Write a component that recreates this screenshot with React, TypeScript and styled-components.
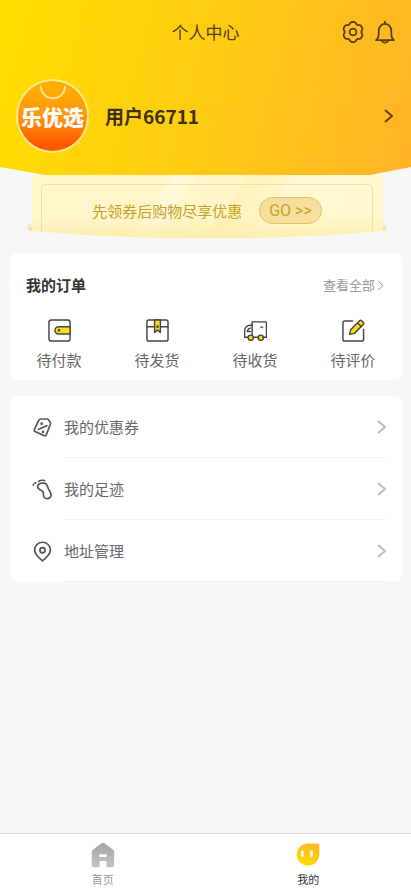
import React from "react";
import styled, { createGlobalStyle } from "styled-components";

const GlobalStyle = createGlobalStyle`
  *, *::before, *::after { box-sizing: border-box; }
  body {
    margin: 0;
    background: #f7f7f7;
    color: #333;
    font-family: "Noto Sans CJK SC", "Noto Sans", sans-serif;
  }
  button {
    margin: 0;
    padding: 0;
    border: 0;
    background: none;
    color: inherit;
    font: inherit;
    cursor: pointer;
  }
  a { color: inherit; text-decoration: none; }
  h1, h2, p, ul { margin: 0; padding: 0; }
  ul { list-style: none; }
  svg { display: block; flex: none; }
`;

const Page = styled.div`
  display: flex;
  flex-direction: column;
  min-height: 100vh;
`;

const Header = styled.header`
  height: 175px;
  color: #533e0c;
  background: linear-gradient(105deg, #ffde00 0%, #ffcf10 42%, #ffb326 100%);
  clip-path: polygon(0 0, 100% 0, 100% 167px, 90% 100%, 11% 100%, 0 167px);
`;

const TitleBar = styled.div`
  display: grid;
  grid-template-columns: 1fr auto 1fr;
  align-items: center;
  height: 64px;
  padding: 0 14px;
`;

const Title = styled.h1`
  grid-column: 2;
  font-size: 17px;
  line-height: 24px;
  font-weight: 400;
`;

const Actions = styled.div`
  display: flex;
  justify-content: flex-end;
  gap: 8px;
`;

const Profile = styled.a`
  display: flex;
  align-items: center;
  height: 104px;
  padding: 0 18px 0 16px;
`;

const Avatar = styled.span`
  position: relative;
  display: flex;
  align-items: center;
  justify-content: center;
  width: 73px;
  height: 74px;
  border: 2px solid #ffe98a;
  border-radius: 50%;
  background: linear-gradient(#ffae00 10%, #ff9410 50%, #ff5a00 90%);
  color: #fff;
  font-size: 21px;
  line-height: 24px;
  font-weight: 900;
  white-space: nowrap;
`;

const BagHandle = styled.svg`
  position: absolute;
  top: 4px;
  left: 20px;
`;

const UserName = styled.span`
  flex: 1;
  padding: 0 0 0 16px;
  color: #3d310c;
  font-size: 19px;
  line-height: 28px;
  font-weight: 700;
`;

const Coupon = styled.a`
  position: relative;
  display: block;
  height: 63px;
  margin: 0 28px 0 32px;
  padding: 9px 10px 0 9px;

  &::before,
  &::after {
    content: "";
    position: absolute;
    bottom: 7px;
    width: 10px;
    height: 9px;
    border-radius: 5px;
    background: linear-gradient(#f8f6ea, #e6dcae);
  }
  &::before { left: -5px; }
  &::after { right: -4px; }
`;

const CouponPaper = styled.span`
  position: absolute;
  inset: 0;
  z-index: 1;
  clip-path: polygon(0 0, 100% 0, 100% 56px, 85% 60px, 65% 100%, 35% 100%, 15% 60px, 0 56px);
  background:
    linear-gradient(#fff3b000 65%, #faeaa0b0),
    linear-gradient(125deg, #fff6cc 36%, #fff9da 36%, #fff9da 42%, #fff6cc 42%, #fff5c8 55%, #fff2b8 55%, #fff6c8 66%, #fff8d4 66%, #fff8cc);
`;

const CouponBody = styled.span`
  position: relative;
  z-index: 2;
  display: flex;
  align-items: center;
  justify-content: center;
  gap: 17px;
  height: 48px;
  padding: 4px 0 0;
  border: 1px solid #eee1a4;
  border-bottom: 0;
  border-radius: 5px 5px 0 0;
  color: #c6a126;
  font-size: 15px;
  line-height: 22px;
`;

const Go = styled.span`
  height: 27px;
  padding: 0 9px;
  border: 1px solid #dfc265;
  border-radius: 14px;
  background: #f7dfa0;
  font-family: Roboto, sans-serif;
  font-size: 16px;
  line-height: 25px;
`;

const Main = styled.main`
  flex: 1;
  display: flex;
  flex-direction: column;
  gap: 16px;
  padding: 15px 9px 16px 10px;
`;

const Card = styled.section`
  border-radius: 8px;
  background: #fff;
`;

const CardHead = styled.div`
  display: flex;
  align-items: center;
  justify-content: space-between;
  padding: 20px 18px 0 16px;
`;

const CardTitle = styled.h2`
  font-size: 15px;
  line-height: 24px;
  font-weight: 700;
`;

const More = styled.a`
  display: flex;
  align-items: center;
  gap: 2px;
  color: #999;
  font-size: 13px;
  line-height: 20px;
`;

const Orders = styled.ul`
  display: grid;
  grid-template-columns: repeat(4, 1fr);
  padding: 22px 0 8px;
`;

const OrderLink = styled.a`
  display: flex;
  flex-direction: column;
  align-items: center;
  gap: 6px;
  color: #666;
  font-size: 15px;
  line-height: 24px;
`;

const MenuLink = styled.a`
  display: flex;
  align-items: center;
  gap: 11px;
  padding: 0 16px 0 22px;
  color: #666;
  font-size: 15px;
  line-height: 22px;
`;

const MenuText = styled.span`
  flex: 1;
  display: flex;
  align-items: center;
  justify-content: space-between;
  padding: 20px 0 19px;
  border-bottom: 1px solid #f0f0f0;
`;

const TabBar = styled.nav`
  display: grid;
  grid-template-columns: 1fr 1fr;
  height: 60px;
  border-top: 1px solid #ddd;
  background: #fff;
`;

const Tab = styled.a<{ $active?: boolean }>`
  display: flex;
  flex-direction: column;
  align-items: center;
  gap: 3px;
  padding-top: 8px;
  color: ${(p) => (p.$active ? "#333" : "#999")};
  font-size: 11px;
  line-height: 16px;
`;

const Stroke = ({
  size = 24,
  width = 2,
  color = "currentColor",
  children,
}: {
  size?: number;
  width?: number;
  color?: string;
  children: React.ReactNode;
}) => (
  <svg
    width={size}
    height={size}
    viewBox="0 0 24 24"
    fill="none"
    stroke={color}
    strokeWidth={width}
    strokeLinecap="round"
    strokeLinejoin="round"
    aria-hidden="true"
  >
    {children}
  </svg>
);

// Outline of a cog with six soft lobes.
const cogPoints = Array.from({ length: 72 }, (_, i) => {
  const a = (i * Math.PI) / 36;
  const r = 9.4 - 0.9 * Math.cos(6 * a) - 0.25 * Math.cos(12 * a);
  return `${(12 + r * Math.cos(a)).toFixed(2)},${(12 + r * Math.sin(a)).toFixed(2)}`;
}).join(" ");

const CogIcon = () => (
  <Stroke width={1.8}>
    <polygon points={cogPoints} />
    <circle cx="12" cy="12" r="3.400" />
  </Stroke>
);

const BellIcon = () => (
  <Stroke width={1.8}>
    <path d="M12 1.600v1.600M4.800 18.200c1.100-2 .9-4.200.9-7.500a6.300 6.800 0 0 1 12.600 0c0 3.300-.2 5.500.9 7.500.8.700 1.700 1.200 1.700 2H3.100c0-.8.9-1.300 1.700-2z" />
    <path d="M8.800 20.800c.8 2.400 5.600 2.400 6.400 0" />
  </Stroke>
);

const Chevron = ({ w, h, color, weight = 2 }: { w: number; h: number; color: string; weight?: number }) => (
  <svg width={w} height={h} viewBox={`0 0 ${w} ${h}`} fill="none" stroke={color} strokeWidth={weight} aria-hidden="true">
    <path d={`M1 1L${w - 1} ${h / 2}L1 ${h - 1}`} />
  </svg>
);

const WalletIcon = () => (
  <Stroke size={23} width={1.5} color="#444">
    <rect x="1" y="1" width="22" height="22" rx="2.500" />
    <path d="M23 8H11a3.800 3.800 0 0 0 0 7.600h12z" fill="#ffde14" />
    <circle cx="11.500" cy="11.800" r=".7" fill="#444" />
  </Stroke>
);

const ParcelIcon = () => (
  <Stroke size={23} width={1.5} color="#444">
    <rect x="1" y="1" width="22" height="22" rx="2" />
    <path d="M1 8h22" />
    <path d="M9 1h6v13l-3-2.500L9 14z" fill="#ffde14" />
    <circle cx="12" cy="8" r=".6" fill="#444" />
  </Stroke>
);

const TruckIcon = () => (
  <Stroke size={23} width={1.5} color="#444">
    <path d="M8.500 3h14a1 1 0 0 1 1 1v15H8.500zM8.500 6.500H6.800C2.800 6.500.6 9.500.6 13v6H8M3.500 13h3.200M3.500 13c.2-2 1.200-3 3-3.500M17.500 8.500h2" />
    <circle cx="7" cy="19.500" r="2.700" fill="#ffde14" />
    <circle cx="17.500" cy="19.500" r="2.700" fill="#ffde14" />
  </Stroke>
);

const ReviewIcon = () => (
  <Stroke size={23} width={1.5} color="#444">
    <path d="M11 2H3a2 2 0 0 0-2 2v17a2 2 0 0 0 2 2h17.500a2 2 0 0 0 2-2V11" />
    <path d="M8 16l1-4.900L18.300 1.900a1.600 1.600 0 0 1 2.200 0l1.700 1.700a1.600 1.600 0 0 1 0 2.200L13 15zM16.200 4l4 4" fill="#ffde14" />
  </Stroke>
);

const TicketIcon = () => (
  <Stroke size={21} width={1.9} color="#555">
    <path d="M9.600 2.300h7.600a2 2 0 0 1 1.700.9l2 3a2 2 0 0 1 .2 1.800l-4.800 12.400a1.600 1.600 0 0 1-2.200.9L3.400 16.500a1.600 1.600 0 0 1-.8-2L7.800 3.500a2 2 0 0 1 1.800-1.200z" />
    <path d="M7.200 14.200l9.800-4.300" />
    <circle cx="11" cy="7.600" r=".6" fill="#555" />
    <circle cx="12.500" cy="17" r=".6" fill="#555" />
  </Stroke>
);

const FootIcon = () => (
  <Stroke size={21} width={1.900} color="#555">
    <path d="M11.500 4.800c3.500-.6 5.600.8 6.400 4.200.7 3.200 3.900 6.200 3.900 9.300 0 2.600-2 4.300-4.500 4.200-2.800-.1-4.400-1.900-4.200-4.500.2-2 .2-3.700-1.900-4.700-2.200-1-4.700-2-4.700-4.500 0-2.100 2.400-3.700 5-4z" />
    <path d="M7.500 2.700c2.200-1.300 4.700-1.500 7-.9M4.200 4.300l-.7.500M1.800 6.200l-.4.700" />
  </Stroke>
);

const PinIcon = () => (
  <Stroke size={21} width={1.900} color="#555">
    <path d="M12 22.700C7 18.700 3 15.300 3 10.200a9 8.800 0 0 1 18 0c0 5.100-4 8.500-9 12.500z" />
    <circle cx="12" cy="10.500" r="3" />
  </Stroke>
);

const HomeIcon = () => (
  <svg width="24" height="26" viewBox="0 0 24 26" aria-hidden="true">
    <defs>
      <linearGradient id="home" x1="0" y1="0" x2="0" y2="1">
        <stop offset="0" stopColor="#a5a5a5" />
        <stop offset="1" stopColor="#c4c4c4" />
      </linearGradient>
    </defs>
    <path
      fill="url(#home)"
      fillRule="evenodd"
      d="M10.600 1.300a2.200 2.200 0 0 1 2.800 0l8.400 6.200A3.500 3.500 0 0 1 23.200 10v13a2.300 2.300 0 0 1-2.300 2.300H15.500V20a1 1 0 0 0-1-1h-5a1 1 0 0 0-1 1v5.300H3.100A2.300 2.300 0 0 1 .8 23V10a3.500 3.500 0 0 1 1.400-2.500zM9.300 12.300a1.200 1.200 0 0 0 0 2.600h5.400a1.200 1.200 0 0 0 0-2.600z"
    />
  </svg>
);

const MineIcon = () => (
  <svg width="24" height="26" viewBox="0 0 24 26" aria-hidden="true">
    <defs>
      <linearGradient id="mine" x1=".7" y1="0" x2=".4" y2="1">
        <stop offset="0" stopColor="#fdb92a" />
        <stop offset="1" stopColor="#ffdc00" />
      </linearGradient>
    </defs>
    <path fill="url(#mine)" d="M12 1.500h10.300a1 1 0 0 1 1 1V13.300A11.400 11.400 0 0 1 .6 13.300 11.600 11.600 0 0 1 12 1.500z" />
    <rect x="5" y="8.500" width="2.800" height="6.500" rx="1.400" fill="#fff" />
    <rect x="14" y="8.500" width="2.800" height="6.500" rx="1.400" fill="#fff" />
  </svg>
);

const orders = [
  { label: "待付款", Icon: WalletIcon },
  { label: "待发货", Icon: ParcelIcon },
  { label: "待收货", Icon: TruckIcon },
  { label: "待评价", Icon: ReviewIcon },
];

const menu = [
  { label: "我的优惠券", Icon: TicketIcon },
  { label: "我的足迹", Icon: FootIcon },
  { label: "地址管理", Icon: PinIcon },
];

export default function App() {
  return (
    <Page>
      <GlobalStyle />
      <Header>
        <TitleBar>
          <Title>个人中心</Title>
          <Actions>
            <button type="button" aria-label="设置">
              <CogIcon />
            </button>
            <button type="button" aria-label="消息">
              <BellIcon />
            </button>
          </Actions>
        </TitleBar>
        <Profile href="#profile">
          <Avatar>
            <BagHandle width="30" height="16" viewBox="0 0 30 16" fill="none" stroke="#ffe49a" strokeWidth="2" strokeLinecap="round" aria-hidden="true">
              <path d="M3 2c1 15 23 15 24 0" />
            </BagHandle>
            乐优选
          </Avatar>
          <UserName>用户66711</UserName>
          <Chevron w={9} h={14} color="#5a430c" />
        </Profile>
      </Header>
      <Coupon href="#coupon">
        <CouponPaper />
        <CouponBody>
          先领券后购物尽享优惠
          <Go>GO &gt;&gt;</Go>
        </CouponBody>
      </Coupon>
      <Main>
        <Card>
          <CardHead>
            <CardTitle>我的订单</CardTitle>
            <More href="#orders">
              查看全部
              <Chevron w={7} h={11} color="#999" weight={1} />
            </More>
          </CardHead>
          <Orders>
            {orders.map(({ label, Icon }) => (
              <li key={label}>
                <OrderLink href="#orders">
                  <Icon />
                  {label}
                </OrderLink>
              </li>
            ))}
          </Orders>
        </Card>
        <Card>
          <ul>
            {menu.map(({ label, Icon }) => (
              <li key={label}>
                <MenuLink href="#menu">
                  <Icon />
                  <MenuText>
                    {label}
                    <Chevron w={9} h={14} color="#bbb" />
                  </MenuText>
                </MenuLink>
              </li>
            ))}
          </ul>
        </Card>
      </Main>
      <TabBar>
        <Tab href="#home">
          <HomeIcon />
          首页
        </Tab>
        <Tab href="#mine" $active aria-current="page">
          <MineIcon />
          我的
        </Tab>
      </TabBar>
    </Page>
  );
}
